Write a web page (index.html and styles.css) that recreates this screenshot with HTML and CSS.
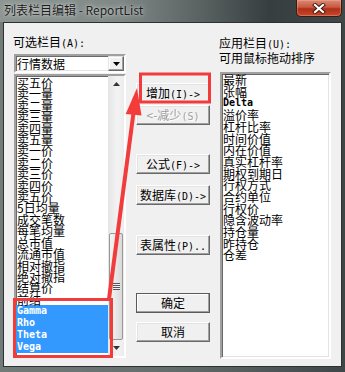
FILE: index.html
```html
<!DOCTYPE html>
<html lang="zh-CN">
<head>
    <meta charset="UTF-8">
    <title>列表栏目编辑 - ReportList</title>
    <link rel="stylesheet" href="styles.css">
</head>
<body>
    <div class="window">
        <div class="titlebar">
            <span class="title">列表栏目编辑 - ReportList</span>
            <div class="close-btn">
                <svg width="14" height="11" viewBox="0 0 14 11">
                    <path d="M3 2 L11 9 M11 2 L3 9" stroke="#3a1810" stroke-width="4" stroke-linecap="square"/>
                    <path d="M3 2 L11 9 M11 2 L3 9" stroke="#fff" stroke-width="2.2" stroke-linecap="square"/>
                </svg>
            </div>
        </div>
        <div class="client">
            <div class="col-left">
                <div class="label">可选栏目<span class="lat">(A):</span></div>
                <div class="combo sunken">
                    <span class="combo-text">行情数据</span>
                    <span class="combo-btn">
                        <svg width="7" height="4" viewBox="0 0 7 4"><path d="M0 0 H7 L3.5 4 Z" fill="#000"/></svg>
                    </span>
                </div>
                <div class="listbox left-list sunken">
                    <div class="list-items">
                        <div class="row">买五价</div>
                        <div class="row">卖一量</div>
                        <div class="row">卖二量</div>
                        <div class="row">卖三量</div>
                        <div class="row">卖四量</div>
                        <div class="row">卖五量</div>
                        <div class="row">卖一价</div>
                        <div class="row">卖二价</div>
                        <div class="row">卖三价</div>
                        <div class="row">卖四价</div>
                        <div class="row">卖五价</div>
                        <div class="row">5日均量</div>
                        <div class="row">成交笔数</div>
                        <div class="row">每笔均量</div>
                        <div class="row">总市值</div>
                        <div class="row">流通市值</div>
                        <div class="row">相对撤指</div>
                        <div class="row">绝对撤指</div>
                        <div class="row">结算价</div>
                        <div class="row">前结</div>
                        <div class="row lat-row sel">Gamma</div>
                        <div class="row lat-row sel">Rho</div>
                        <div class="row lat-row sel">Theta</div>
                        <div class="row lat-row sel">Vega</div>
                    </div>
                    <div class="vscroll">
                        <div class="sb-btn">
                            <svg width="7" height="4" viewBox="0 0 7 4"><path d="M0 4 H7 L3.5 0 Z" fill="#333"/></svg>
                        </div>
                        <div class="sb-track">
                            <div class="sb-thumb">
                                <div class="grip"></div>
                            </div>
                        </div>
                        <div class="sb-btn">
                            <svg width="7" height="4" viewBox="0 0 7 4"><path d="M0 0 H7 L3.5 4 Z" fill="#333"/></svg>
                        </div>
                    </div>
                </div>
            </div>

            <div class="col-mid">
                <div class="btn btn-add">增加<span class="lat">(I)-&gt;</span></div>
                <div class="btn btn-del disabled">&lt;-减少<span class="lat">(S)</span></div>
                <div class="btn btn-formula">公式<span class="lat">(F)-&gt;</span></div>
                <div class="btn btn-db">数据库<span class="lat">(D)-&gt;</span></div>
                <div class="btn btn-prop">表属性<span class="lat">(P)..</span></div>
                <div class="btn btn-ok default">确定</div>
                <div class="btn btn-cancel">取消</div>
            </div>

            <div class="col-right">
                <div class="label two-line">应用栏目<span class="lat">(U):</span><br>可用鼠标拖动排序</div>
                <div class="listbox right-list sunken">
                    <div class="list-items">
                        <div class="row">最新</div>
                        <div class="row">张幅</div>
                        <div class="row lat-row">Delta</div>
                        <div class="row">溢价率</div>
                        <div class="row">杠杆比率</div>
                        <div class="row">时间价值</div>
                        <div class="row">内在价值</div>
                        <div class="row">真实杠杆率</div>
                        <div class="row">期权到期日</div>
                        <div class="row">行权方式</div>
                        <div class="row">合约单位</div>
                        <div class="row">行权价</div>
                        <div class="row">隐含波动率</div>
                        <div class="row">持仓量</div>
                        <div class="row">昨持仓</div>
                        <div class="row">仓差</div>
                    </div>
                </div>
            </div>
        </div>
    </div>

    <!-- red annotation marks drawn over the dialog -->
    <svg class="marks" width="345" height="372" viewBox="0 0 345 372">
        <rect x="140.5" y="74" width="69" height="28" fill="none" stroke="#f23c3c" stroke-width="3"/>
        <rect x="14.5" y="299.5" width="97" height="57" fill="none" stroke="#f23c3c" stroke-width="3"/>
        <line x1="109" y1="299" x2="133.6" y2="112" stroke="#f23c3c" stroke-width="4"/>
        <polygon points="137,88 125.7,114 141.5,115.5" fill="#f23c3c"/>
    </svg>
</body>
</html>
```

FILE: styles.css
```css
* {
    margin: 0;
    padding: 0;
    box-sizing: border-box;
}
body {
    width: 345px;
    height: 372px;
    overflow: hidden;
    position: relative;
    font-family: "Noto Sans CJK SC", "Noto Sans", sans-serif;
    font-size: 12px;
    color: #000;
    background: linear-gradient(90deg, #737b79 0%, #646c6b 50%, #3e4648 100%);
}
.lat {
    font-family: "DejaVu Sans Mono", monospace;
    font-size: 10px;
}
.window {
    height: 372px;
    display: flex;
    flex-direction: column;
}

/* title bar */
.titlebar {
    height: 22px;
    flex: none;
    display: flex;
    align-items: flex-start;
    background: linear-gradient(90deg, #8d9592 0%, #7f8885 35%, #5a6362 58%, #363e40 78%, #404849 100%);
}
.title {
    padding: 3px 0 0 4px;
    line-height: 14px;
    color: #1c1c1c;
    text-shadow: 0 0 6px rgba(255, 255, 255, .65), 0 0 2px rgba(255, 255, 255, .5);
}
.close-btn {
    margin-left: auto;
    margin-right: 3px;
    width: 46px;
    height: 17px;
    border: 1px solid #3e1a12;
    border-top: none;
    border-radius: 0 0 5px 5px;
    background: linear-gradient(#d98a78 0%, #c9583f 45%, #b02f18 55%, #c8472c 100%);
    box-shadow: inset 0 0 0 1px rgba(255, 190, 170, .35);
    display: flex;
    align-items: center;
    justify-content: center;
}

/* client area */
.client {
    flex: 1;
    margin: 0 3px 5px;
    border: 1px solid #2c3133;
    background: #f0f0f0;
    display: flex;
    gap: 10px;
    padding: 12px 10px 0;
}
.col-left {
    width: 112px;
    display: flex;
    flex-direction: column;
}
.col-mid {
    width: 74px;
    display: flex;
    flex-direction: column;
}
.col-right {
    width: 111px;
    display: flex;
    flex-direction: column;
}
.label {
    line-height: 14px;
    margin-left: -1px;
}
.label.two-line {
    line-height: 13px;
    margin-top: 1px;
}

.sunken {
    border: 2px solid;
    border-color: #a0a0a0 #fff #fff #a0a0a0;
    box-shadow: inset 1px 1px #696969, inset -1px -1px #e3e3e3;
    background: #fff;
}

/* combo box */
.combo {
    height: 19px;
    margin-top: 3px;
    display: flex;
    align-items: stretch;
}
.combo-text {
    flex: 1;
    padding-left: 1px;
    line-height: 15px;
}
.combo-btn {
    width: 16px;
    background: #f0f0f0;
    border: 1px solid;
    border-color: #e3e3e3 #696969 #696969 #e3e3e3;
    box-shadow: inset -1px -1px #a0a0a0, inset 1px 1px #fff;
    display: flex;
    align-items: center;
    justify-content: center;
}

/* list boxes */
.listbox {
    display: flex;
    overflow: hidden;
}
.left-list {
    height: 284px;
    margin-top: 1px;
}
.right-list {
    height: 287px;
    margin-top: 8px;
}
.list-items {
    flex: 1;
    overflow: hidden;
}
.left-list .list-items {
    padding-top: 1px;
}
.row {
    line-height: 11.4px;
    padding-left: 1px;
    white-space: nowrap;
}
.right-list .row {
    line-height: 11.65px;
}
.lat-row {
    font-family: "DejaVu Sans Mono", monospace;
    font-size: 10px;
    font-weight: bold;
    line-height: 12px;
}
.right-list .lat-row {
    line-height: 12px;
}
.row.sel {
    background: #3399ff;
    color: #fff;
}

/* scroll bar */
.vscroll {
    width: 16px;
    display: flex;
    flex-direction: column;
    background: linear-gradient(90deg, #e6e6e6, #f3f3f3 60%, #ececec);
}
.sb-btn {
    height: 16px;
    display: flex;
    align-items: center;
    justify-content: center;
}
.sb-track {
    flex: 1;
    display: flex;
    flex-direction: column;
    justify-content: flex-end;
}
.sb-thumb {
    height: 107px;
    margin: 0 1px;
    border: 1px solid #979797;
    border-radius: 2px;
    background: linear-gradient(90deg, #f4f4f4, #e8e8e8 50%, #d9d9d9);
    display: flex;
    align-items: center;
    justify-content: center;
}
.grip {
    width: 7px;
    height: 7px;
    background: repeating-linear-gradient(#565656 0 1px, #f2f2f2 1px 2px);
}

/* push buttons */
.btn {
    height: 20px;
    line-height: 18px;
    text-align: center;
    white-space: nowrap;
    background: #f0f0f0;
    border: 1px solid;
    border-color: #fff #696969 #696969 #fff;
    box-shadow: inset -1px -1px #a0a0a0, inset 1px 1px #e3e3e3;
}
.btn.default {
    border-color: #5a5a5a;
    box-shadow: inset -1px -1px #a0a0a0, inset 1px 1px #fff;
}
.btn.disabled {
    color: #a0a0a0;
    text-shadow: 1px 1px #fff;
}
.btn-add {
    margin-top: 48px;
}
.btn-del {
    margin-top: 2px;
}
.btn-formula {
    margin-top: 29px;
}
.btn-db {
    margin-top: 11px;
}
.btn-prop {
    margin-top: 30px;
}
.btn-ok {
    margin-top: 38px;
}
.btn-cancel {
    margin-top: 9px;
}

/* annotation overlay */
.marks {
    position: absolute;
    left: 0;
    top: 0;
    pointer-events: none;
}
```
